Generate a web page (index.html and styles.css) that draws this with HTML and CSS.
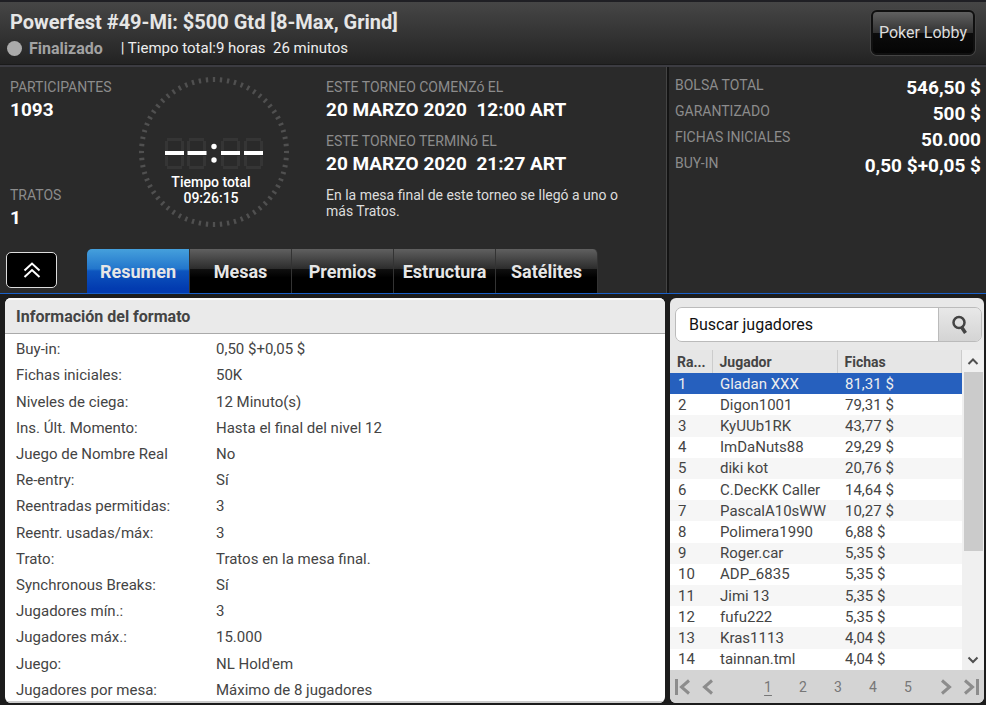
FILE: index.html
```html
<!DOCTYPE html>
<html lang="es">
<head>
  <meta charset="UTF-8">
  <meta name="viewport" content="width=device-width, initial-scale=1.0">
  <title>Powerfest #49-Mi: $500 Gtd [8-Max, Grind]</title>
  <link rel="stylesheet" href="styles.css">
</head>
<body>
  <header class="header">
    <div>
      <h1 class="title">Powerfest #49-Mi: $500 Gtd [8-Max, Grind]</h1>
      <div class="status">
        <span class="dot"></span>
        <span class="state">Finalizado</span>
        <span class="elapsed">| Tiempo total:9 horas&nbsp; 26 minutos</span>
      </div>
    </div>
    <button class="lobby">Poker Lobby</button>
  </header>

  <section class="info">
    <div class="info-main">
      <div class="overview">
        <div class="stats">
          <div>
            <div class="label">PARTICIPANTES</div>
            <div class="value">1093</div>
          </div>
          <div>
            <div class="label">TRATOS</div>
            <div class="value">1</div>
          </div>
        </div>
        <div class="clock">
          <svg class="clock-face" width="150" height="150" viewBox="0 0 150 150">
            <defs>
              <path id="seg" d="M2 1.5H17M2 29.5H17M1.5 3V13M17.5 3V13M1.5 18V28M17.5 18V28"/>
            </defs>
            <circle cx="75" cy="75" r="72.5" fill="none" stroke="#505050" stroke-width="5" pathLength="192" stroke-dasharray="1 2" stroke-dashoffset="0.5"/>
            <g stroke="#353535" stroke-width="3" fill="none">
              <use href="#seg" x="26" y="61"/>
              <use href="#seg" x="48" y="61"/>
              <use href="#seg" x="82" y="61"/>
              <use href="#seg" x="105" y="61"/>
            </g>
            <path d="M26 76H45M48.5 76H67.5M82 76H101M105 76H124" stroke="#fff" stroke-width="4"/>
            <circle cx="75" cy="69.5" r="2.7" fill="#fff"/>
            <circle cx="75" cy="83" r="2.7" fill="#fff"/>
          </svg>
          <div class="clock-text">Tiempo total<br>09:26:15</div>
        </div>
        <div class="dates">
          <div>
            <div class="label">ESTE TORNEO COMENZó EL</div>
            <div class="value">20 MARZO 2020&nbsp; 12:00 ART</div>
          </div>
          <div>
            <div class="label">ESTE TORNEO TERMINó EL</div>
            <div class="value">20 MARZO 2020&nbsp; 21:27 ART</div>
          </div>
          <p class="note">En la mesa final de este torneo se llegó a uno o más Tratos.</p>
        </div>
      </div>
      <div class="tabbar">
        <button class="collapse" aria-label="Contraer">
          <svg width="18" height="18" viewBox="0 0 18 18" fill="none" stroke="#fff" stroke-width="2">
            <path d="M1.5 9.5L9 2.5L16.5 9.5M1.5 16L9 9L16.5 16"/>
          </svg>
        </button>
        <nav class="tabs">
          <button class="tab active">Resumen</button>
          <button class="tab">Mesas</button>
          <button class="tab">Premios</button>
          <button class="tab">Estructura</button>
          <button class="tab">Satélites</button>
        </nav>
      </div>
    </div>
    <dl class="prizes">
      <dt>BOLSA TOTAL</dt><dd>546,50 $</dd>
      <dt>GARANTIZADO</dt><dd>500 $</dd>
      <dt>FICHAS INICIALES</dt><dd>50.000</dd>
      <dt>BUY-IN</dt><dd>0,50 $+0,05 $</dd>
    </dl>
  </section>

  <main class="content">
    <section class="panel format">
      <h2 class="panel-title">Información del formato</h2>
      <div class="format-body">
        <table class="format-table">
          <tr><th>Buy-in:</th><td>0,50 $+0,05 $</td></tr>
          <tr><th>Fichas iniciales:</th><td>50K</td></tr>
          <tr><th>Niveles de ciega:</th><td>12 Minuto(s)</td></tr>
          <tr><th>Ins. Últ. Momento:</th><td>Hasta el final del nivel 12</td></tr>
          <tr><th>Juego de Nombre Real</th><td>No</td></tr>
          <tr><th>Re-entry:</th><td>Sí</td></tr>
          <tr><th>Reentradas permitidas:</th><td>3</td></tr>
          <tr><th>Reentr. usadas/máx:</th><td>3</td></tr>
          <tr><th>Trato:</th><td>Tratos en la mesa final.</td></tr>
          <tr><th>Synchronous Breaks:</th><td>Sí</td></tr>
          <tr><th>Jugadores mín.:</th><td>3</td></tr>
          <tr><th>Jugadores máx.:</th><td>15.000</td></tr>
          <tr><th>Juego:</th><td>NL Hold'em</td></tr>
          <tr><th>Jugadores por mesa:</th><td>Máximo de 8 jugadores</td></tr>
        </table>
      </div>
    </section>

    <section class="panel players">
      <form class="search">
        <input class="search-input" type="text" placeholder="Buscar jugadores" aria-label="Buscar jugadores">
        <button class="search-btn" type="button" aria-label="Buscar">
          <svg width="18" height="20" viewBox="0 0 18 20" fill="none" stroke="#444">
            <circle cx="8" cy="7.5" r="5.5" stroke-width="2.5"/>
            <path d="M10.5 12L14.5 18" stroke-width="3.5"/>
          </svg>
        </button>
      </form>
      <div class="list">
        <table class="players-table">
          <thead>
            <tr><th class="rank">Ra...</th><th class="name">Jugador</th><th>Fichas</th></tr>
          </thead>
          <tbody>
            <tr class="selected"><td>1</td><td>Gladan XXX</td><td>81,31 $</td></tr>
            <tr><td>2</td><td>Digon1001</td><td>79,31 $</td></tr>
            <tr><td>3</td><td>KyUUb1RK</td><td>43,77 $</td></tr>
            <tr><td>4</td><td>ImDaNuts88</td><td>29,29 $</td></tr>
            <tr><td>5</td><td>diki kot</td><td>20,76 $</td></tr>
            <tr><td>6</td><td>C.DecKK Caller</td><td>14,64 $</td></tr>
            <tr><td>7</td><td>PascalA10sWW</td><td>10,27 $</td></tr>
            <tr><td>8</td><td>Polimera1990</td><td>6,88 $</td></tr>
            <tr><td>9</td><td>Roger.car</td><td>5,35 $</td></tr>
            <tr><td>10</td><td>ADP_6835</td><td>5,35 $</td></tr>
            <tr><td>11</td><td>Jimi 13</td><td>5,35 $</td></tr>
            <tr><td>12</td><td>fufu222</td><td>5,35 $</td></tr>
            <tr><td>13</td><td>Kras1113</td><td>4,04 $</td></tr>
            <tr><td>14</td><td>tainnan.tml</td><td>4,04 $</td></tr>
          </tbody>
        </table>
        <div class="scrollbar">
          <svg width="20" height="22" viewBox="0 0 20 22" fill="none" stroke="#505050" stroke-width="2"><path d="M5.5 14L10 9.5L14.5 14"/></svg>
          <div class="track"><div class="thumb"></div></div>
          <svg width="20" height="22" viewBox="0 0 20 22" fill="none" stroke="#505050" stroke-width="2"><path d="M5.5 9.5L10 14L14.5 9.5"/></svg>
        </div>
      </div>
      <nav class="pager">
        <button class="page-btn" aria-label="Primera">
          <svg width="16" height="16" viewBox="0 0 16 16"><path d="M1.5 0V16M14 1.5L6.5 8L14 14.5"/></svg>
        </button>
        <button class="page-btn" aria-label="Anterior">
          <svg width="16" height="16" viewBox="0 0 16 16"><path d="M12 1.5L4.5 8L12 14.5"/></svg>
        </button>
        <div class="pages">
          <a class="page current" href="#">1</a>
          <a class="page" href="#">2</a>
          <a class="page" href="#">3</a>
          <a class="page" href="#">4</a>
          <a class="page" href="#">5</a>
        </div>
        <button class="page-btn" aria-label="Siguiente">
          <svg width="16" height="16" viewBox="0 0 16 16"><path d="M4 1.5L11.5 8L4 14.5"/></svg>
        </button>
        <button class="page-btn" aria-label="Última">
          <svg width="16" height="16" viewBox="0 0 16 16"><path d="M14.5 0V16M2 1.5L9.5 8L2 14.5"/></svg>
        </button>
      </nav>
    </section>
  </main>
</body>
</html>
```

FILE: styles.css
```css
* { box-sizing: border-box; }
body { margin: 0; height: 100vh; display: flex; flex-direction: column; background: #1c1c1c; color: #fff; font-family: Roboto, sans-serif; font-size: 15px; }
h1, h2, p, dl, dd { margin: 0; }
button, input { font-family: inherit; padding: 0; margin: 0; }
svg { display: block; }

/* header */
.header { height: 67px; display: flex; justify-content: space-between; align-items: flex-start; padding: 8px 11px 8px 10px; background: linear-gradient(#464646, #222); border-top: 2px solid #1f1f24; border-bottom: 2px solid #3c3c42; box-shadow: inset 0 -1px #1a1a1a; }
.title { font-size: 20px; line-height: 24px; font-weight: 700; color: #e6e6e6; }
.status { display: flex; align-items: center; line-height: 29px; }
.dot { width: 15px; height: 15px; border-radius: 50%; background: #aaa; margin: 0 7px 0 -3px; }
.state { margin-right: 18px; font-size: 16px; font-weight: 700; color: #a2a2a2; }
.elapsed { color: #eee; }
.lobby { width: 104px; height: 45px; color: #ddd; font-size: 16px; border: 2px solid #101010; border-radius: 6px; background: linear-gradient(#606060, #333 50%, #0c0c0c 50%, #050505); box-shadow: 0 0 0 1px #444; }

/* tournament info */
.info { display: flex; background: #2a2a2a; border-bottom: 1px solid #1a60c8; }
.info-main { flex: 1; }
.overview { display: flex; height: 182px; padding: 10px 10px 18px; }
.label { font-size: 14px; line-height: 20px; color: #8c8c8c; }
.value { font-size: 19px; line-height: 26px; font-weight: 700; }
.stats { width: 129px; display: flex; flex-direction: column; justify-content: space-between; }
.clock { width: 187px; display: grid; justify-items: start; }
.clock-face, .clock-text { grid-area: 1 / 1; }
.clock-text { width: 144px; padding-top: 97px; text-align: center; font-size: 14px; line-height: 16px; font-weight: 500; }
.dates { flex: 1; display: flex; flex-direction: column; gap: 8px; }
.note { max-width: 310px; margin-top: 2px; font-size: 14px; line-height: 16px; color: #ddd; }
.tabbar { display: flex; align-items: flex-start; gap: 30px; padding-left: 6px; }
.collapse { width: 51px; height: 36px; margin-top: 3px; display: grid; place-items: center; background: #000; border: 1px solid #ddd; border-radius: 5px; }
.tabs { display: flex; }
.tab { width: 102px; height: 44px; color: #e6e6e6; font-size: 18px; font-weight: 700; border: 0; border-right: 1px solid #333; background: linear-gradient(#606060, #2c2c2c 45%, #101010 45%, #000 65%); }
.tab:first-child { width: 103px; border-radius: 5px 0 0 0; }
.tab:last-child { border-radius: 0 5px 0 0; }
.tab.active { background: linear-gradient(#45a0dc, #2376cc 45%, #0d55be 50%, #023bb0 90%); }
.prizes { width: 319px; display: grid; grid-template-columns: auto 1fr; grid-auto-rows: 26px; padding: 8px 5px 0 6px; border-left: 2px solid #141414; box-shadow: -1px 0 #444; }
.prizes dt { font-size: 14px; line-height: 20px; color: #8c8c8c; }
.prizes dd { font-size: 19px; line-height: 26px; font-weight: 700; text-align: right; }

/* panels */
.content { flex: 1; min-height: 0; display: flex; gap: 5px; padding: 4px 2px 2px 5px; color: #444; }
.panel { display: flex; flex-direction: column; border-radius: 6px; overflow: hidden; }
.format { flex: 1; background: #fff; }
.panel-title { height: 36px; padding-left: 11px; font-size: 16px; line-height: 34px; font-weight: 700; background: #eaeaea; border-top: 2px solid #fafafa; border-bottom: 1px solid #aaa; }
.format-body { flex: 1; min-height: 0; padding-top: 2px; box-shadow: inset 0 -2px #ccc; }
.format-table { width: 100%; height: 100%; border-collapse: collapse; table-layout: fixed; }
.format-table th { width: 211px; padding: 0 0 0 11px; font-weight: 400; text-align: left; }
.format-table td { padding: 0; }

.players { width: 314px; background: #e8e8e8; }
.search { display: flex; height: 35px; margin: 9px 2px 8px 5px; border: 1px solid #bbb; border-radius: 7px; overflow: hidden; }
.search-input { flex: 1; min-width: 0; padding-left: 13px; font-size: 16px; border: 0; background: #fff; }
.search-input::placeholder { color: #111; opacity: 1; }
.search-btn { width: 43px; display: grid; place-items: center; border: 0; border-left: 1px solid #bbb; background: linear-gradient(#e8e8e8, #d4d4d4); }
.list { flex: 1; min-height: 0; display: flex; }
.players-table { flex: 1; height: 100%; border-collapse: collapse; table-layout: fixed; background: #fff; }
.players-table th { height: 23px; padding: 0 0 0 7px; font-size: 14px; line-height: 16px; font-weight: 700; text-align: left; background: #e6e6e6; border-right: 1px solid #ccc; }
.players-table td { padding: 0 0 0 8px; font-size: 15px; line-height: 18px; }
.players-table .rank { width: 42px; }
.players-table .name { width: 125px; }
.players-table tr:nth-child(odd) { background: #f6f6f6; }
.players-table tr.selected { background: #2660be; color: #eee; }
.scrollbar { width: 22px; display: flex; flex-direction: column; align-items: center; background: #f0f0f0; }
.track { flex: 1; width: 19px; }
.thumb { height: 65%; background: #cbcbcb; }
.pager { height: 33px; display: flex; align-items: center; gap: 9px; padding: 0 5px; background: #d4d4d4; }
.page-btn { width: 16px; height: 16px; border: 0; background: none; }
.page-btn path { fill: none; stroke: #8c8c8c; stroke-width: 3; }
.pages { flex: 1; display: flex; justify-content: space-between; padding: 0 14px 0 36px; }
.page { width: 14px; font-size: 14px; line-height: 20px; text-align: center; color: #777; text-decoration: none; }
.page.current { text-decoration: underline; text-underline-offset: 3px; }
```
